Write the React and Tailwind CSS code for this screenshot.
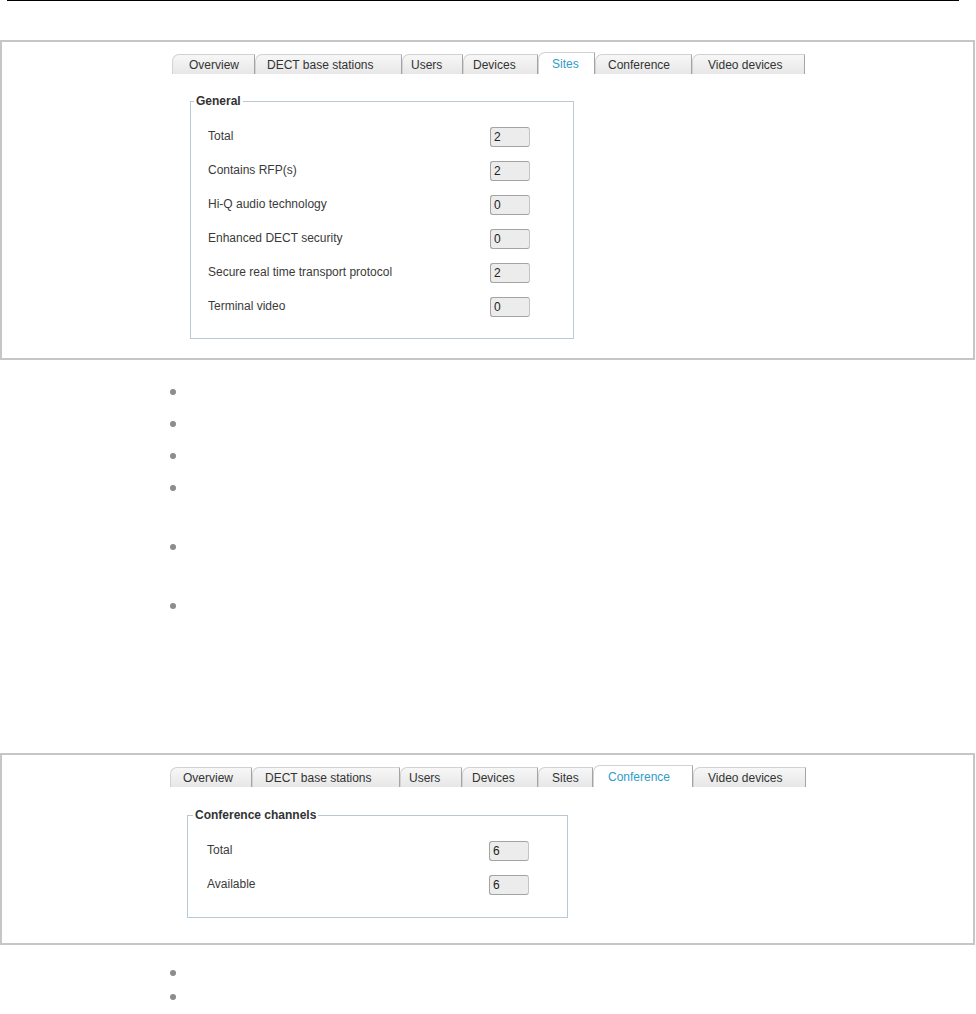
import React from "react";

const TABS = ["Overview", "DECT base stations", "Users", "Devices", "Sites", "Conference", "Video devices"];

const SITES_TABS = [
  { w: "w-[83px]", pl: "pl-[16px]" },
  { w: "w-[147px]", pl: "pl-[11px]" },
  { w: "w-[61px]", pl: "pl-[8px]" },
  { w: "w-[75px]", pl: "pl-[9px]" },
  { w: "w-[57px]", pl: "pl-[13px]" },
  { w: "w-[97px]", pl: "pl-[12px]" },
  { w: "w-[113px]", pl: "pl-[15px]" },
];

const CONF_TABS = [
  { w: "w-[82px]", pl: "pl-[12px]" },
  { w: "w-[148px]", pl: "pl-[12px]" },
  { w: "w-[62px]", pl: "pl-[8px]" },
  { w: "w-[76px]", pl: "pl-[9px]" },
  { w: "w-[55px]", pl: "pl-[13px]" },
  { w: "w-[100px]", pl: "pl-[14px]" },
  { w: "w-[113px]", pl: "pl-[14px]" },
];

const GENERAL = [
  ["Total", "2"],
  ["Contains RFP(s)", "2"],
  ["Hi-Q audio technology", "0"],
  ["Enhanced DECT security", "0"],
  ["Secure real time transport protocol", "2"],
  ["Terminal video", "0"],
];

const CHANNELS = [
  ["Total", "6"],
  ["Available", "6"],
];

function TabBar({ sizes, active, className }) {
  return (
    <div className={`flex h-[22px] items-end ${className}`}>
      {TABS.map((label, i) => {
        const isActive = i === active;
        return (
          <div
            key={label}
            className={`${sizes[i].w} ${sizes[i].pl} flex items-center rounded-tl-[7px] border-t border-l border-r border-[#d2d2d2] border-r-[#a4a4a4] ${
              isActive
                ? "h-[22px] bg-white text-[#2f9cc9]"
                : "h-[20px] bg-gradient-to-b from-[#f7f7f7] to-[#e7e7e7] text-[#333]"
            }`}
          >
            {label}
          </div>
        );
      })}
    </div>
  );
}

function Group({ legend, rows, className, legendPos, rowPad }) {
  return (
    <div className={`relative border border-[#b7c9d6] ${className}`}>
      <span className={`absolute -top-[8px] ${legendPos} bg-white px-[2px] font-bold leading-[14px] text-[#333]`}>
        {legend}
      </span>
      <div className={`pt-[25px] ${rowPad}`}>
        {rows.map(([label, value]) => (
          <div key={label} className="flex h-[34px] items-start">
            <span className="mt-[2px] flex-1 leading-[14px] text-[#3a3a3a]">{label}</span>
            <span className="flex h-[20px] w-[40px] items-center rounded-[3px] border border-[#a3a3a3] border-r-[#c4c4c4] bg-[#ececec] pl-[3px] leading-none text-[#222]">
              {value}
            </span>
          </div>
        ))}
      </div>
    </div>
  );
}

function Bullet({ h }) {
  return (
    <li className={`${h} pl-[170px]`}>
      <div className="h-[6px] w-[6px] rounded-full bg-[#8c8c8c]" />
    </li>
  );
}

export default function App() {
  return (
    <div className="h-[1014px] w-[976px] overflow-hidden bg-white font-['Liberation_Sans',Arial,sans-serif] text-[12px] text-[#333]">
      <div className="ml-[7px] h-px w-[952px] bg-black" />

      <div className="mt-[39px] h-[320px] w-[975px] border-2 border-[#c6c6c6]">
        <TabBar sizes={SITES_TABS} active={4} className="ml-[170px] mt-[10px]" />
        <Group
          legend="General"
          rows={GENERAL}
          className="ml-[188px] mt-[27px] h-[238px] w-[384px]"
          legendPos="left-[3px]"
          rowPad="pl-[17px] pr-[43px]"
        />
      </div>

      <ul className="mt-[29px]">
        <Bullet h="h-[32px]" />
        <Bullet h="h-[32px]" />
        <Bullet h="h-[32px]" />
        <Bullet h="h-[59px]" />
        <Bullet h="h-[59px]" />
        <Bullet h="h-[150px]" />
      </ul>

      <div className="h-[192px] w-[975px] border-2 border-[#c6c6c6]">
        <TabBar sizes={CONF_TABS} active={5} className="ml-[168px] mt-[10px]" />
        <Group
          legend="Conference channels"
          rows={CHANNELS}
          className="ml-[185px] mt-[28px] h-[103px] w-[381px]"
          legendPos="left-[5px]"
          rowPad="pl-[19px] pr-[38px]"
        />
      </div>

      <ul className="mt-[25px]">
        <Bullet h="h-[24px]" />
        <Bullet h="h-[24px]" />
      </ul>
    </div>
  );
}
